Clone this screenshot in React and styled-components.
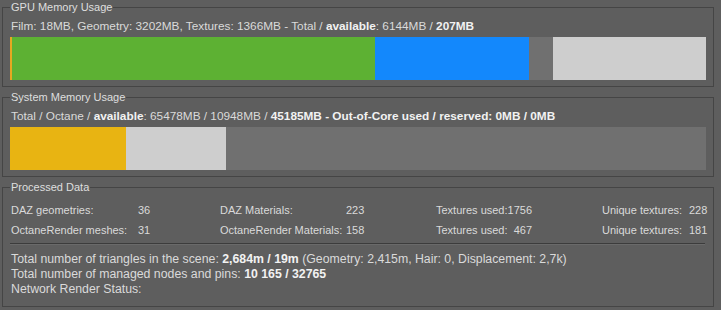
import styled, { createGlobalStyle } from "styled-components";

const GlobalStyle = createGlobalStyle`
	html, body {
		margin: 0;
		padding: 0;
		background: #5e5e5e;
	}
	body {
		font-family: "Liberation Sans", Arial, sans-serif;
		color: #dadada;
		width: 721px;
		height: 310px;
		overflow: hidden;
	}
`;

const gpu = [
	{ mb: 18, color: "#e6a821" },
	{ mb: 3202, color: "#5db133" },
	{ mb: 1366, color: "#1388fc" },
	{ mb: 207, color: "transparent" },
	{ mb: 1351, color: "#cecece" },
];

const system = [
	{ mb: 10948, color: "#e8b412" },
	{ mb: 9345, color: "#cecece" },
	{ mb: 45185, color: "transparent" },
];

const TRACK = 696;

const Page = styled.div`
	display: flex;
	flex-direction: column;
	padding: 0 7px 0 2px;
`;

const Group = styled.fieldset`
	margin: ${(props) => (props.$first ? "0" : "3px")} 0 0 0;
	padding: 4px 7px ${(props) => props.$bottom || 6}px 7px;
	border: 1px solid #454545;
	min-width: 0;
`;

const Title = styled.legend`
	padding: 0 1px;
	font-size: 11px;
	line-height: 14px;
	color: #dedede;
`;

const Info = styled.div`
	font-size: 11.8px;
	line-height: 16px;
	padding-left: 1px;
	white-space: nowrap;
	b {
		color: #f2f2f2;
	}
`;

const Track = styled.div`
	display: flex;
	margin-top: 3px;
	width: ${TRACK}px;
	height: 43px;
	background: #707070;
`;

const Segment = styled.div`
	flex: none;
	height: 100%;
	background: ${(props) => props.$color};
`;

const Bar = ({ parts }) => {
	const total = parts.reduce((s, p) => s + p.mb, 0);
	return (
		<Track>
			{parts.map((p, i) => (
				<Segment key={i} $color={p.color} style={{ width: (p.mb / total) * TRACK }} />
			))}
		</Track>
	);
};

const Stats = styled.div`
	display: grid;
	grid-template-columns: 127px 82px 126px 90px 96px 70px 87px 1fr;
	grid-auto-rows: 20px;
	align-items: center;
	font-size: 11px;
	padding-left: 1px;
	padding-top: 2px;
	white-space: nowrap;
`;

const Pair = styled.div`
	display: flex;
	justify-content: space-between;
`;

const Separator = styled.div`
	margin-top: 3px;
	height: 1px;
	width: 695px;
	background: #3c3c3c;
	box-shadow: 0 1px 0 #6a6a6a;
`;

const Summary = styled.div`
	margin-top: 8px;
	font-size: 12.3px;
	line-height: 15px;
	padding-left: 1px;
	white-space: nowrap;
	b {
		color: #f2f2f2;
	}
`;

export default function App() {
	return (
		<>
			<GlobalStyle />
			<Page>
				<Group $first>
					<Title>GPU Memory Usage</Title>
					<Info>
						Film: 18MB, Geometry: 3202MB, Textures: 1366MB - Total / <b>available</b>: 6144MB / <b>207MB</b>
					</Info>
					<Bar parts={gpu} />
				</Group>
				<Group>
					<Title>System Memory Usage</Title>
					<Info>
						Total / Octane / <b>available</b>: 65478MB / 10948MB / <b>45185MB - Out-of-Core used / reserved: 0MB / 0MB</b>
					</Info>
					<Bar parts={system} />
				</Group>
				<Group $bottom={9}>
					<Title>Processed Data</Title>
					<Stats>
						<span>DAZ geometries:</span>
						<span>36</span>
						<span>DAZ Materials:</span>
						<span>223</span>
						<Pair><span>Textures used:</span><span>1756</span></Pair>
						<span />
						<span>Unique textures:</span>
						<span>228</span>
						<span>OctaneRender meshes:</span>
						<span>31</span>
						<span>OctaneRender Materials:</span>
						<span>158</span>
						<Pair><span>Textures used:</span><span>467</span></Pair>
						<span />
						<span>Unique textures:</span>
						<span>181</span>
					</Stats>
					<Separator />
					<Summary>
						Total number of triangles in the scene: <b>2,684m / 19m</b> (Geometry: 2,415m, Hair: 0, Displacement: 2,7k)
						<br />
						Total number of managed nodes and pins: <b>10 165 / 32765</b>
						<br />
						Network Render Status:
					</Summary>
				</Group>
			</Page>
		</>
	);
}
